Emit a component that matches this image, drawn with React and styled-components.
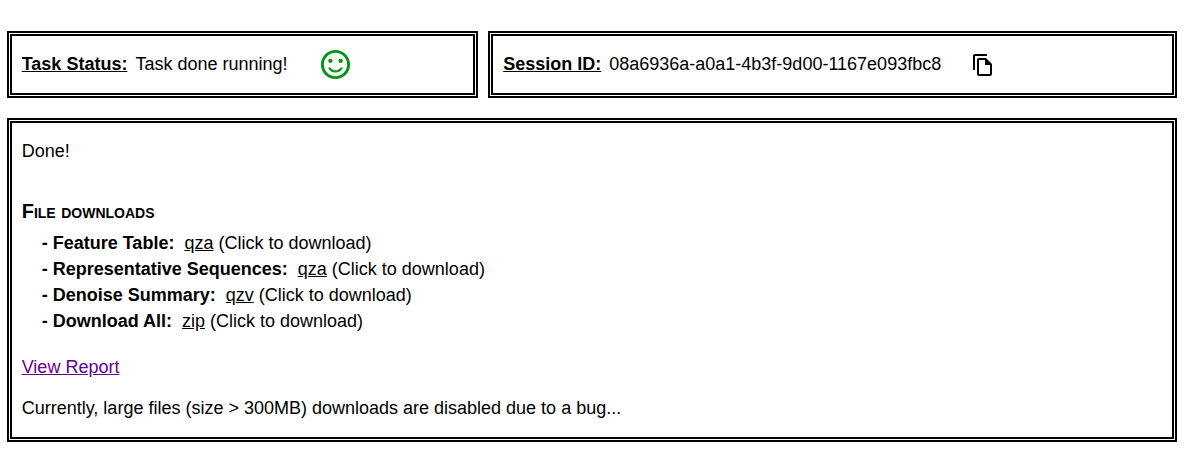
import React from 'react';
import styled, { createGlobalStyle } from 'styled-components';

const GlobalStyle = createGlobalStyle`
  * { box-sizing: border-box; }
  body {
    margin: 0;
    background: #fff;
    color: #000;
    font-family: "Liberation Sans", Arial, sans-serif;
    font-size: 18px;
    line-height: 26px;
    overflow: hidden;
  }
`;

const Page = styled.main`
  padding: 31px 8px 0 7px;
`;

const TopRow = styled.div`
  display: grid;
  grid-template-columns: 471px 1fr;
  gap: 10px;
  margin-bottom: 20px;
`;

const Box = styled.section`
  border: 5px double #000;
`;

const StatusBox = styled(Box)`
  display: flex;
  align-items: flex-start;
  height: 67px;
  padding: 15px 10px 0 ${(p) => p.$inset || '10px'};
`;

const Label = styled.span`
  font-weight: bold;
  text-decoration: underline;
  margin-right: 8px;
`;

const Smiley = styled.svg`
  width: 35px;
  height: 35px;
  margin: -4px 0 0 30px;
  fill: #009614;
`;

const CopyIcon = styled.svg`
  width: 24px;
  height: 24px;
  margin: 2px 0 0 30px;
  fill: #000;
`;

const ResultBox = styled(Box)`
  height: 324px;
  padding: 15px 10px 0 9.7px;
`;

const Text = styled.p`
  margin: 0;
`;

const Heading = styled.h2`
  margin: 34px 0 6px;
  font-size: 20px;
  line-height: 26px;
  font-variant: small-caps;
`;

const FileList = styled.ul`
  list-style: none;
  margin: 0 0 20px;
  padding: 0 0 0 20px;
`;

const FileName = styled.b`
  margin-right: 10px;
`;

const FileLink = styled.a`
  color: #000;
  text-decoration: underline;
`;

const ReportLink = styled.a`
  display: inline-block;
  margin-bottom: 15px;
  color: #660091;
  text-decoration: underline;
`;

const files = [
  ['Feature Table', 'qza'],
  ['Representative Sequences', 'qza'],
  ['Denoise Summary', 'qzv'],
  ['Download All', 'zip'],
];

export default function App() {
  return (
    <Page>
      <GlobalStyle />
      <TopRow>
        <StatusBox $inset="9.7px">
          <Label>Task Status:</Label>
          Task done running!
          <Smiley viewBox="0 0 24 24">
            <circle cx="15.5" cy="9.5" r="1.5" />
            <circle cx="8.5" cy="9.5" r="1.5" />
            <path d="M11.99 2C6.47 2 2 6.48 2 12s4.47 10 9.99 10C17.52 22 22 17.52 22 12S17.52 2 11.99 2zM12 20c-4.42 0-8-3.58-8-8s3.58-8 8-8 8 3.58 8 8-3.58 8-8 8zm0-4c-1.48 0-2.75-.81-3.45-2H6.88c.8 2.05 2.79 3.5 5.12 3.5s4.32-1.45 5.12-3.5h-1.67c-.7 1.19-1.97 2-3.45 2z" />
          </Smiley>
        </StatusBox>
        <StatusBox $inset="10.2px">
          <Label>Session ID:</Label>
          08a6936a-a0a1-4b3f-9d00-1167e093fbc8
          <CopyIcon viewBox="0 0 24 24">
            <path d="M16 1H4c-1.1 0-2 .9-2 2v14h2V3h12V1zm-1 4H8c-1.1 0-1.99.9-1.99 2L6 21c0 1.1.89 2 1.99 2H19c1.1 0 2-.9 2-2V11l-6-6zM8 21V7h6v5h5v9H8z" />
          </CopyIcon>
        </StatusBox>
      </TopRow>
      <ResultBox>
        <Text>Done!</Text>
        <Heading>File downloads</Heading>
        <FileList>
          {files.map(([name, type]) => (
            <li key={name}>
              <FileName>- {name}:</FileName>
              <FileLink href="#">{type}</FileLink> (Click to download)
            </li>
          ))}
        </FileList>
        <ReportLink href="#">View Report</ReportLink>
        <Text>Currently, large files (size &gt; 300MB) downloads are disabled due to a bug...</Text>
      </ResultBox>
    </Page>
  );
}
